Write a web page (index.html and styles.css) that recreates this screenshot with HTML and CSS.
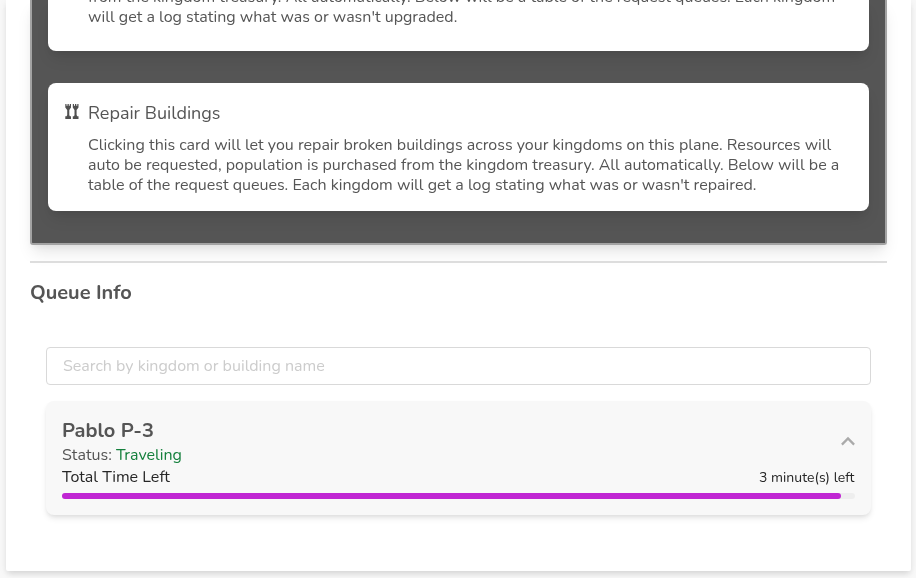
FILE: index.html
```html
<!DOCTYPE html>
<html lang="en">
<head>
<meta charset="utf-8">
<title>Kingdom Queues</title>
<link rel="stylesheet" href="styles.css">
</head>
<body>
<main class="panel">
  <section class="actions">
    <article class="action upgrade">
      <p class="copy"><span class="line">from the kingdom treasury. All automatically. Below will be a table of the request queues. Each kingdom</span><span class="line">will get a log stating what was or wasn't upgraded.</span></p>
    </article>
    <article class="action">
      <header class="action-title">
        <svg class="towers" viewBox="0 0 14 16" aria-hidden="true"><path d="M.3 0h1.2v1.8h1V0h1.3v1.8h1V0H6v3.4L4.3 6v5l.5 1.2H6V15H.3v-2.8h1.3l.6-1.2V6L.3 3.4zM7.8 0H9v1.8h1V0h1.3v1.8h1V0h1.2v3.4L11.6 6v5l.6 1.2h1.3V15H7.8v-2.8H9L9.5 11V6L7.8 3.4z"/></svg>
        <h2>Repair Buildings</h2>
      </header>
      <p class="copy"><span class="line">Clicking this card will let you repair broken buildings across your kingdoms on this plane. Resources will</span><span class="line">auto be requested, population is purchased from the kingdom treasury. All automatically. Below will be a</span><span class="line">table of the request queues. Each kingdom will get a log stating what was or wasn't repaired.</span></p>
    </article>
  </section>
  <hr class="divider">
  <h2 class="heading">Queue Info</h2>
  <section class="queue">
    <input class="search" type="text" placeholder="Search by kingdom or building name">
    <article class="kingdom">
      <div class="summary">
        <div>
          <h3>Pablo P-3</h3>
          <p class="status">Status: <span>Traveling</span></p>
        </div>
        <svg class="chevron" viewBox="0 0 14 9" aria-hidden="true"><path d="M.9 7.6 7 1.5l6.1 6.1"/></svg>
      </div>
      <div class="timing"><span>Total Time Left</span><span class="left">3 minute(s) left</span></div>
      <div class="track"><div class="fill"></div></div>
    </article>
  </section>
</main>
</body>
</html>
```
FILE: styles.css
```css
* { box-sizing: border-box; margin: 0; }
body {
  height: 578px;
  overflow: hidden;
  padding: 0 5px 0 6px;
  background: #f8f8f8;
  color: #555;
  font: 16px/20px Nunito, Lato, "Open Sans", sans-serif;
}
.panel {
  height: 571px;
  padding: 0 24px;
  background: #fff;
  border-radius: 0 0 2px 2px;
  box-shadow: 0 4px 6px -1px rgb(0 0 0 / 10%), 0 2px 8px rgb(0 0 0 / 6%);
  will-change: opacity;
}
.actions {
  height: 245px;
  padding: 0 16px;
  border: 2px solid #a3a3a3;
  border-top: 0;
  border-radius: 0 0 3px 3px;
  background: #555;
  box-shadow: 0 10px 15px -3px rgb(0 0 0 / 10%), 0 4px 6px -2px rgb(0 0 0 / 5%);
}
.action {
  height: 128px;
  padding: 20px 16px 0;
  border-radius: 8px;
  background: #fff;
  box-shadow: 0 10px 15px -3px rgb(0 0 0 / 10%), 0 4px 6px -2px rgb(0 0 0 / 5%);
}
.upgrade {
  display: flex;
  align-items: flex-end;
  height: 51px;
  margin-bottom: 32px;
  padding: 0 16px 24px;
  border-radius: 0 0 8px 8px;
}
.action-title { display: flex; gap: 9px; height: 20px; }
.action-title h2 { font-size: 18px; font-weight: 400; white-space: nowrap; }
.towers { width: 14px; height: 16px; margin: 1px 0 0 1px; fill: #505050; }
.copy { padding-left: 24px; }
.action-title + .copy { margin-top: 12px; }
.line { display: block; white-space: nowrap; }
.divider { height: 2px; margin-top: 16px; border: 0; background: #ddd; }
.heading { margin-top: 16px; font-size: 20px; line-height: 28px; font-weight: 700; }
.queue { padding: 40px 16px 0; }
.search {
  display: block;
  width: 100%;
  height: 38px;
  padding: 0 16px;
  border: 1px solid #d9d9d9;
  border-radius: 4px;
  background: #fff;
  font: inherit;
}
.search::placeholder { color: #ccc; opacity: 1; }
.kingdom {
  height: 114px;
  margin-top: 16px;
  padding: 16px 16px 0;
  border-radius: 8px;
  background: #f8f8f8;
  box-shadow: 0 4px 6px -1px rgb(0 0 0 / 10%), 0 2px 4px -1px rgb(0 0 0 / 6%);
}
.summary { display: flex; justify-content: space-between; align-items: center; height: 48px; }
h3 { font-size: 20px; line-height: 28px; }
.status span { color: #15803d; }
.chevron { width: 14px; height: 9px; margin-right: .5px; fill: none; stroke: #aaa; stroke-width: 2.3; overflow: visible; }
.timing { display: flex; justify-content: space-between; height: 24px; padding-right: .6px; line-height: 24px; color: #262626; }
.left { font-size: 14px; line-height: 26px; }
.track { height: 6px; margin-top: 4px; border-radius: 3px; background: #eee; }
.fill { width: 98.2%; height: 6px; border-radius: 3px; background: #c026d3; }
```
